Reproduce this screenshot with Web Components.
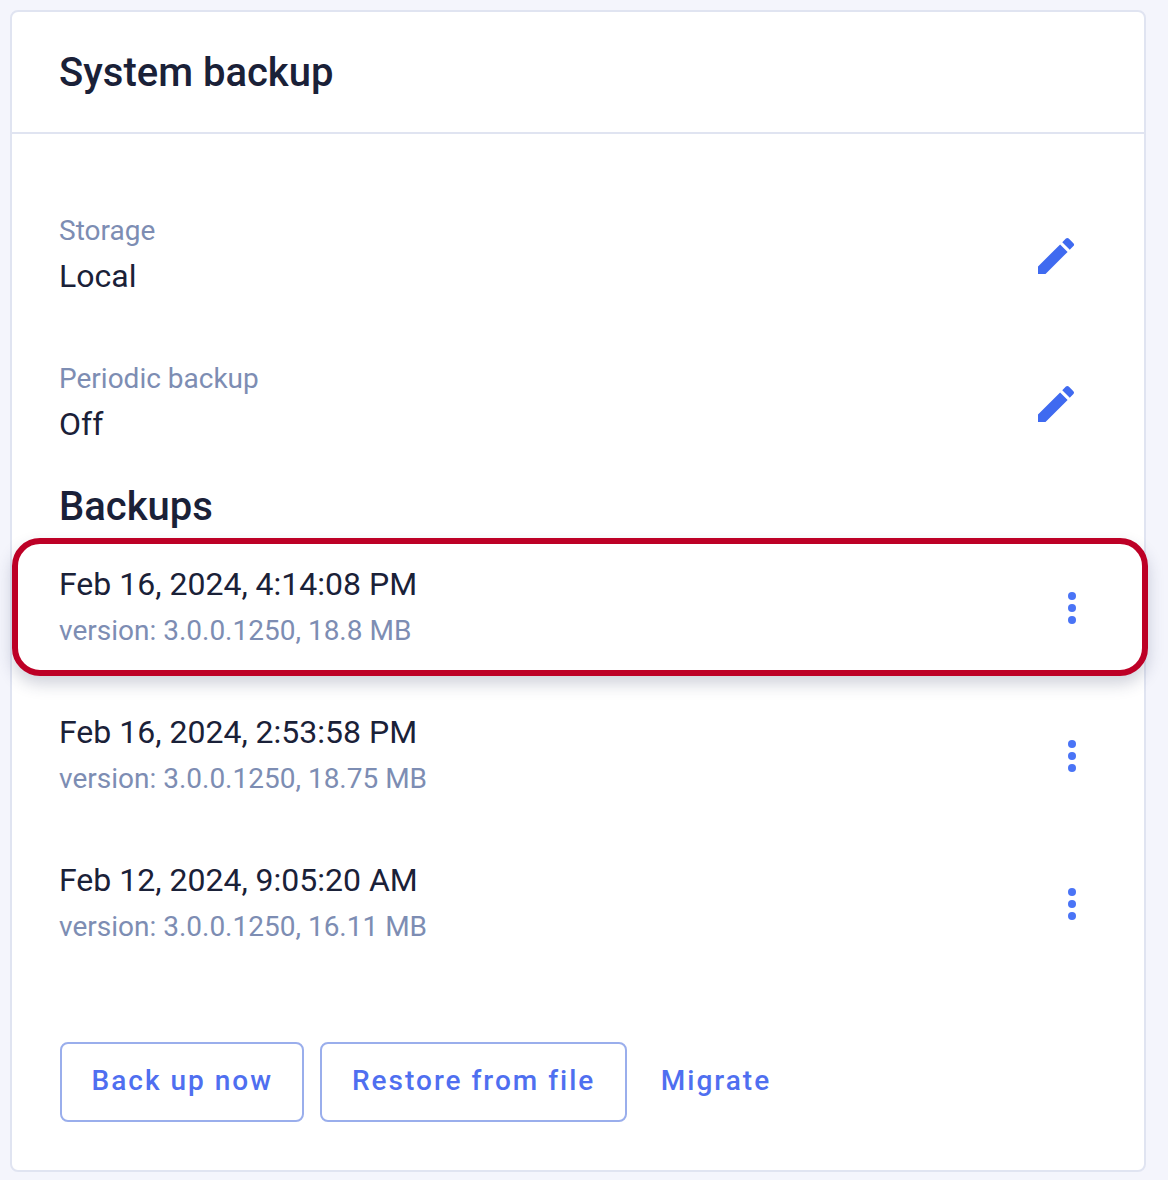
<!DOCTYPE html>
<html><head><meta charset="utf-8"><style>
html,body{margin:0;padding:0;background:#f4f5fc;}
body{font-family:Roboto,"Liberation Sans",sans-serif;height:1180px;overflow:hidden}
</style></head><body>
<backup-card title-text="System backup">
  <setting-row label="Storage" value="Local"></setting-row>
  <setting-row label="Periodic backup" value="Off"></setting-row>
  <section-title>Backups</section-title>
  <backup-row date="Feb 16, 2024, 4:14:08 PM" meta="version: 3.0.0.1250, 18.8 MB" highlighted></backup-row>
  <backup-row date="Feb 16, 2024, 2:53:58 PM" meta="version: 3.0.0.1250, 18.75 MB"></backup-row>
  <backup-row date="Feb 12, 2024, 9:05:20 AM" meta="version: 3.0.0.1250, 16.11 MB"></backup-row>
  <action-bar slot="actions">
    <action-button outlined>Back up now</action-button>
    <action-button outlined>Restore from file</action-button>
    <action-button>Migrate</action-button>
  </action-bar>
</backup-card>
<script>
function def(name, html, attrs){
  customElements.define(name, class extends HTMLElement{
    connectedCallback(){
      if(this.shadowRoot) return;
      const r=this.attachShadow({mode:'open'});
      let h=html;
      (attrs||[]).forEach(a=>{h=h.split('{{'+a+'}}').join(this.getAttribute(a)||'')});
      r.innerHTML=h;
    }
  });
}
def('backup-card',`<style>
:host{display:block;box-sizing:border-box;margin:10px 0 0 10px;width:1136px;height:1162px;background:#fff;border:2px solid #e0e4f1;border-radius:8px;color:#1a2138}
header{box-sizing:border-box;height:122px;border-bottom:2px solid #e0e4f1;padding:2px 47px 0;display:flex;align-items:center;font-size:40px;font-weight:500;line-height:1}
.body{padding-top:48px}
.actions{padding:0 48px}
</style><header>{{title-text}}</header><div class="body"><slot></slot></div><div class="actions"><slot name="actions"></slot></div>`,['title-text']);
def('setting-row',`<style>
:host{display:flex;box-sizing:border-box;height:148px;padding:0 48px 0 47px;align-items:center;justify-content:space-between}
.t{padding-bottom:7px}
.l{font-size:28px;line-height:46px;color:#7d8db3}
.v{font-size:32px;line-height:44px;color:#1a2138}
svg{display:block;width:48px;height:48px;margin-right:16px}
</style><div class="t"><div class="l">{{label}}</div><div class="v">{{value}}</div></div>
<svg viewBox="0 0 24 24" fill="#3f6af0"><path d="M3 17.25V21h3.75L17.81 9.94l-3.75-3.75L3 17.25zM20.71 7.04a1 1 0 0 0 0-1.41l-2.34-2.34a1 1 0 0 0-1.41 0l-1.83 1.83 3.75 3.75 1.83-1.83z"/></svg>`,['label','value']);
def('section-title',`<style>
:host{display:block;box-sizing:border-box;padding:0 48px 0 47px;height:60px;margin-top:-4px;font-size:40px;font-weight:500;line-height:66px;color:#1a2138}
</style><slot></slot>`);
customElements.define('backup-row',class extends HTMLElement{
  connectedCallback(){
    if(this.shadowRoot) return;
    const r=this.attachShadow({mode:'open'});
    r.innerHTML=`<style>
:host{display:flex;position:relative;box-sizing:border-box;height:148px;padding:0 48px 0 47px;align-items:center;justify-content:space-between}
.d{font-size:32px;line-height:46px;color:#1a2138}
.m{font-size:28px;line-height:48px;color:#7d8db3}
.t{position:relative}
svg{position:relative;display:block;width:48px;height:48px}
.hl{position:absolute;left:0;right:-4px;top:4px;bottom:6px;box-sizing:border-box;border:6px solid #bd0026;border-radius:28px;background:#fff;box-shadow:0 8px 16px rgba(40,50,90,.22)}
</style>${this.hasAttribute('highlighted')?'<div class="hl"></div>':''}
<div class="t"><div class="d">${this.getAttribute('date')}</div><div class="m">${this.getAttribute('meta')}</div></div>
<svg viewBox="0 0 24 24" fill="#4a74f6"><circle cx="12" cy="6" r="2"/><circle cx="12" cy="12" r="2"/><circle cx="12" cy="18" r="2"/></svg>`;
  }
});
def('action-bar',`<style>
:host{display:flex;gap:16px;margin-top:64px}
</style><slot></slot>`);
customElements.define('action-button',class extends HTMLElement{
  connectedCallback(){
    if(this.shadowRoot) return;
    const r=this.attachShadow({mode:'open'});
    r.innerHTML=`<style>
:host{display:inline-flex;box-sizing:border-box;height:80px;align-items:center;padding:0 29.5px 3px;font-size:28px;font-weight:500;letter-spacing:2px;color:#4f6ff0;border-radius:8px;${this.hasAttribute('outlined')?'border:2px solid #9aaeec;':'padding:0 18px 3px;'}}
</style><slot></slot>`;
  }
});
</script>
</body></html>
